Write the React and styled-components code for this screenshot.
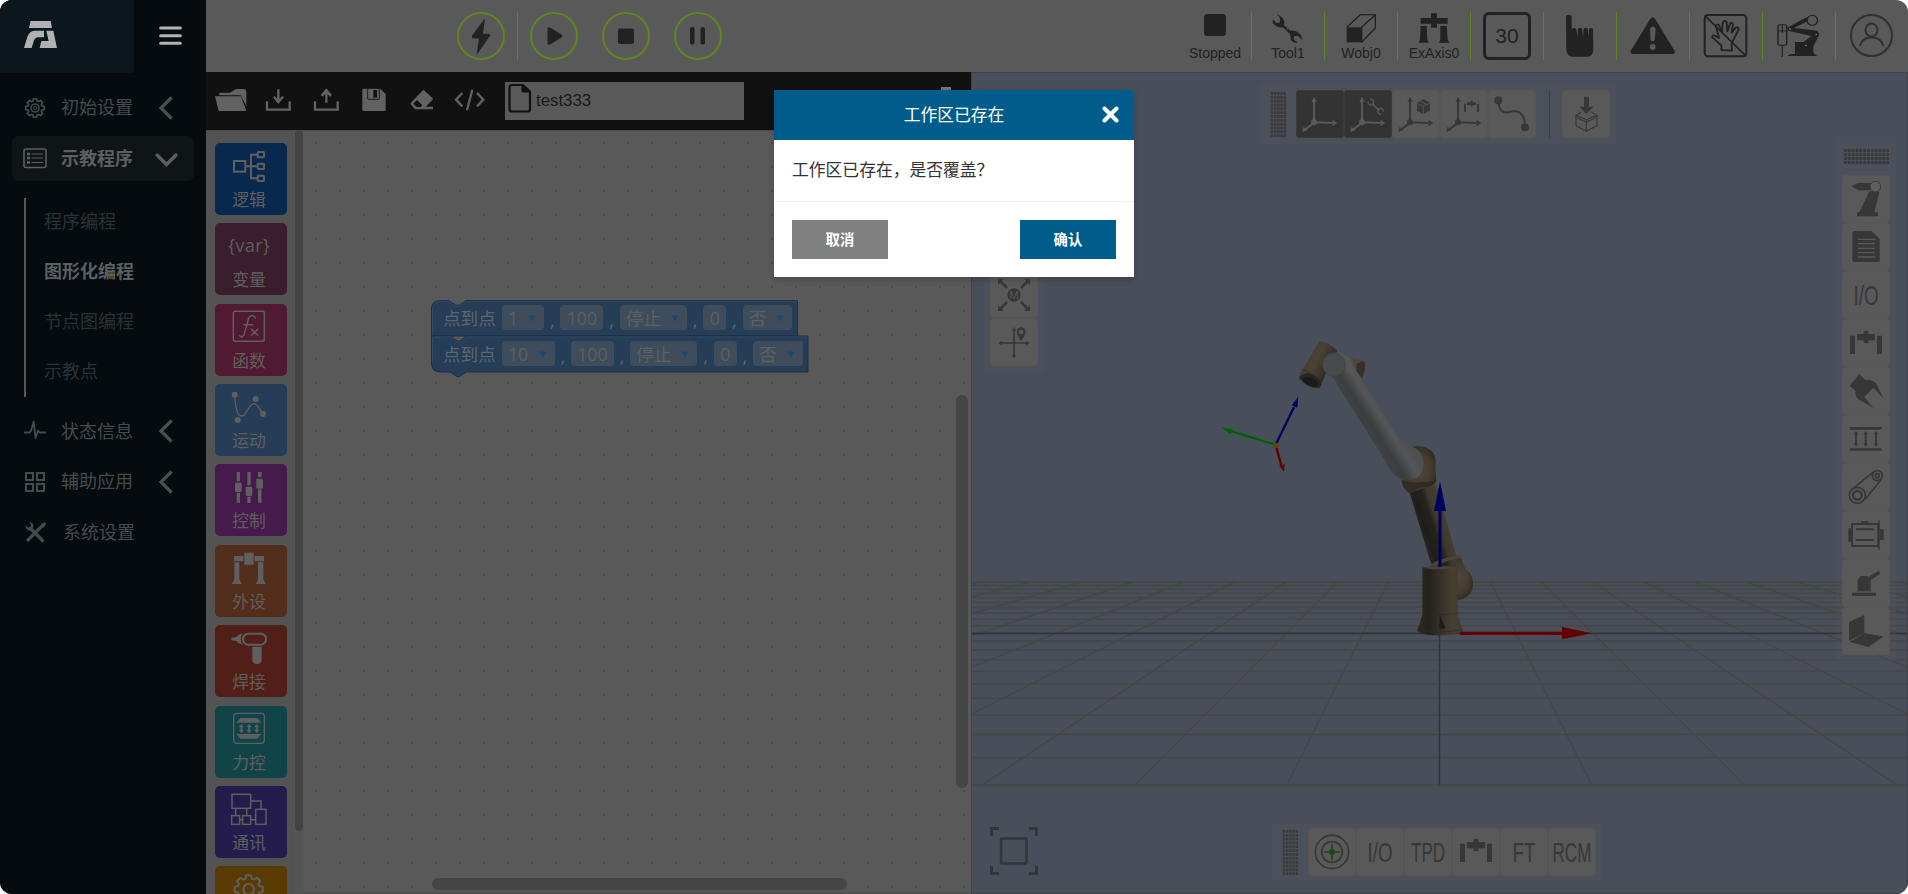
import React from "react";
import styled, { createGlobalStyle, css } from "styled-components";

const GlobalStyle = createGlobalStyle`
  * { box-sizing: border-box; }
  html, body { margin: 0; padding: 0; background: #fff; overflow: hidden; }
  svg { display: block; flex: none; }
`;

const cjk = `"Open Sans", "Noto Sans CJK SC", sans-serif`;
const latin = `"Liberation Sans", "Noto Sans CJK SC", sans-serif`;
const ink = "#222222";
const tool = "#373737";
const pale = "#595959";

const Shell = styled.div`
  display: flex;
  width: 1908px;
  height: 894px;
  border-radius: 12px;
  overflow: hidden;
  background: ${pale};
  font-family: ${cjk};
  position: relative;
`;

/* ---------- sidebar ---------- */
const Sidebar = styled.aside`
  width: 206px;
  flex: none;
  background: #050b0f;
  display: flex;
  flex-direction: column;
`;
const SideHeader = styled.div`
  display: flex;
  height: 73px;
`;
const LogoBox = styled.div`
  width: 134px;
  background: #0c171d;
`;
const Nav = styled.nav`
  display: flex;
  flex-direction: column;
  padding: 12px 12px 0;
`;
const NavItem = styled.div`
  display: flex;
  align-items: center;
  height: 45px;
  margin-bottom: 5.5px;
  padding-left: 11px;
  border-radius: 6px;
  font-size: 18px;
  line-height: 43px;
  color: ${(p) => (p.$active ? "#5c5f60" : "#454a4d")};
  font-weight: ${(p) => (p.$active ? 700 : 400)};
  background: ${(p) => (p.$active ? "#0f1416" : "transparent")};
`;
const NavLabel = styled.span`
  width: ${(p) => (p.$shift ? 90 : 92)}px;
  margin-left: ${(p) => (p.$shift ? 16 : 14)}px;
`;
const SubNav = styled.div`
  margin: 11.5px 0 12px 12px;
  height: 199px;
  border-left: 2px solid #565859;
  padding-left: 18px;
`;
const SubItem = styled.div`
  height: 50.2px;
  line-height: 47px;
  font-size: 18px;
  font-weight: ${(p) => (p.$active ? 700 : 400)};
  color: ${(p) => (p.$active ? "#5c5f60" : "#2b3235")};
`;

/* ---------- top header ---------- */
const Main = styled.div`
  flex: 1;
  display: flex;
  flex-direction: column;
  min-width: 0;
`;
const Header = styled.header`
  height: 72px;
  flex: none;
  display: flex;
  align-items: center;
  padding-left: 251px;
`;
const RoundButton = styled.div`
  width: 48px;
  height: 48px;
  border: 2px solid #5f8420;
  border-radius: 50%;
  margin-right: 24px;
  display: flex;
  align-items: center;
  justify-content: center;
`;
const RunDivider = styled.div`
  width: 1px;
  height: 48px;
  background: #5f8420;
  margin: 0 12px 0 -12px;
`;
const StatusGroup = styled.div`
  margin-left: auto;
  display: flex;
`;
const StatusCell = styled.div`
  width: ${(p) => (p.$last ? 72 : 73)}px;
  height: 48px;
  border-right: ${(p) => (p.$last ? 0 : 1)}px solid #5f8420;
  display: flex;
  flex-direction: column;
  align-items: center;
  font-family: ${latin};
  font-size: 14px;
  line-height: 19px;
  color: ${ink};
`;
const SpeedBox = styled.div`
  width: 48px;
  height: 48px;
  border: 3px solid ${ink};
  border-radius: 6px;
  font-size: 21px;
  line-height: 41px;
  text-align: center;
`;

/* ---------- editor ---------- */
const Content = styled.div`
  flex: 1;
  display: flex;
  min-height: 0;
`;
const Editor = styled.section`
  width: 765px;
  flex: none;
  display: flex;
  flex-direction: column;
`;
const FileBar = styled.div`
  height: 58px;
  flex: none;
  background: #111111;
  display: flex;
  align-items: center;
  padding-left: 1px;
`;
const FileInput = styled.div`
  width: 239px;
  height: 38px;
  margin-left: 10px;
  background: ${pale};
  display: flex;
  font-family: ${latin};
  font-size: 16.8px;
  line-height: 37px;
  color: #1a1a1a;
`;
const EditorBody = styled.div`
  flex: 1;
  display: flex;
  min-height: 0;
`;
const Toolbox = styled.div`
  width: 89px;
  flex: none;
  background: #535353;
  border-top: 1px solid #4a4a4a;
  padding: 12px 0 0 9px;
  display: flex;
  flex-direction: column;
  gap: 8.36px;
  overflow: hidden;
`;
const Tile = styled.div`
  width: 72px;
  height: 72px;
  flex: none;
  border-radius: 5px;
  background: ${(p) => p.$color};
  color: #5f5f5f;
  font-size: 16.8px;
  line-height: 26px;
  overflow: hidden;
`;
const TileLabel = styled.div`
  margin-top: 2px;
  padding-right: 4px;
  text-align: center;
`;
const ToolboxScroll = styled.div`
  width: 8px;
  flex: none;
  background: #555555;
  &::before {
    content: "";
    display: block;
    height: 701px;
    border-radius: 4px;
    background: #444444;
  }
`;
const Canvas = styled.div`
  flex: 1;
  position: relative;
  border-top: 1px solid #4a4a4a;
  border-bottom: 2px solid #515151;
  background-color: ${pale};
  background-image: linear-gradient(#3a3a3a, #3a3a3a), linear-gradient(#4d4d4d, #4d4d4d);
  background-repeat: repeat;
  background-image: radial-gradient(circle at 1px 1px, #383838 0.4px, transparent 0.95px);
  background-size: 24px 24px;
  background-position: 12px 11px;
`;
const ScrollThumb = styled.div`
  position: absolute;
  border-radius: 6px;
  background: #454545;
  ${(p) =>
    p.$vertical
      ? css`right: 3px; top: 264px; width: 12px; height: 393px;`
      : css`left: 129px; bottom: 2px; width: 415px; height: 12px;`}
`;
const Blocks = styled.div`
  position: absolute;
  left: 128px;
  top: 169px;
  width: 380px;
  height: 80px;
`;
const BlockShape = styled.svg`
  position: absolute;
  left: 0;
  top: 0;
`;
const BlockRow = styled.div`
  position: relative;
  height: 36px;
  display: flex;
  align-items: center;
  padding: 0 0 1px 12px;
  font-size: 17.6px;
  line-height: 24px;
  color: #5c6670;
`;
const BlockName = styled.span`
  width: 59px;
`;
const Field = styled.span`
  width: ${(p) => p.$w}px;
  height: 25px;
  border-radius: 4px;
  background: #3f4c5b;
  color: #5d5f61;
  display: flex;
  align-items: center;
  justify-content: ${(p) => (p.$menu ? "space-between" : "center")};
  padding: 0 ${(p) => (p.$menu ? "8px 0 6px" : "0")};
`;
const Comma = styled.span`
  width: 16.4px;
  text-align: center;
  padding-top: 4px;
`;

/* ---------- 3D view ---------- */
const Viewport = styled.section`
  flex: 1;
  position: relative;
  background: #484e5a;
  border: 1px solid #414348;
  overflow: hidden;
`;
const Panel = styled.div`
  position: absolute;
  background: rgba(89, 89, 89, 0.2);
  display: flex;
  flex-direction: ${(p) => (p.$column ? "column" : "row")};
  align-items: center;
  padding: 6px;
`;
const TopPanel = styled(Panel)`left: 288px; top: 11px; width: 356px; height: 60px; padding-left: 10px;`;
const LeftPanel = styled(Panel)`left: 12px; top: 47px; width: 60px; height: 252px; justify-content: flex-end;`;
const RightPanel = styled(Panel)`right: 11px; top: 65px; width: 60px; height: 523px; padding-top: 10px;`;
const BottomPanel = styled(Panel)`left: 300px; top: 749px; width: 330px; height: 60px; padding-left: 10px;`;
const Grip = styled.div`
  flex: none;
  width: ${(p) => (p.$wide ? 46 : 16)}px;
  height: ${(p) => (p.$wide ? 16 : 46)}px;
  margin: ${(p) => (p.$wide ? "0 0 11px 0" : "0 10px 0 0")};
  background-image: linear-gradient(#4d4f54 1px, transparent 1px),
    linear-gradient(90deg, #4d4f54 1px, transparent 1px);
  background-color: #383a3e;
  background-size: ${(p) => (p.$wide ? "3.85px 4px" : "3.2px 3.85px")};
`;
const PanelButton = styled.div`
  width: 48px;
  height: 48px;
  flex: none;
  border-radius: 3px;
  border: 1px solid ${(p) => (p.$on ? "#3a3a3a" : "#565656")};
  background: ${(p) => (p.$on ? "#333333" : pale)};
  color: ${(p) => (p.$on ? pale : tool)};
  svg { margin: -1px; }
`;
const PanelDivider = styled.div`
  flex: none;
  width: 1px;
  height: 48px;
  background: #3e3f40;
  margin: 0 12px 0 13px;
`;
const FrameButton = styled.div`
  position: absolute;
  left: 18px;
  top: 754px;
`;

/* ---------- dialog ---------- */
const Dialog = styled.div`
  position: absolute;
  left: 774px;
  top: 90px;
  width: 360px;
  height: 187px;
  background: #fff;
  box-shadow: 0 3px 6px rgba(0, 0, 0, 0.16);
  display: flex;
  flex-direction: column;
`;
const DialogHead = styled.div`
  height: 50px;
  background: #005c8b;
  color: #fff;
  font-size: 16.8px;
  line-height: 49px;
  text-align: center;
  position: relative;
  svg { position: absolute; right: 15px; top: 16px; }
`;
const DialogBody = styled.div`
  height: 62px;
  padding-left: 18px;
  border-bottom: 1px solid #f0f0f0;
  color: #333;
  font-size: 16.8px;
  line-height: 60px;
`;
const DialogFoot = styled.div`
  flex: 1;
  display: flex;
  justify-content: space-between;
  padding: 18px;
`;
const DialogButton = styled.button`
  width: 96px;
  height: 39px;
  border: 0;
  padding: 1px 0 0;
  background: ${(p) => (p.$primary ? "#005c8b" : "#808080")};
  color: #fff;
  font: 700 14.4px/38px ${cjk};
`;

/* ---------- drawings ---------- */
const Art = ({ box, w, h, children, color = "currentColor", stretch }) => (
  <svg width={w} height={h} viewBox={box} fill={color} preserveAspectRatio={stretch ? "none" : undefined}>
    {children}
  </svg>
);
const Line = ({ d, w = 5, c = "currentColor", ...rest }) => (
  <path d={d} fill="none" stroke={c} strokeWidth={w} {...rest} />
);

const Chevron = ({ down }) =>
  down ? (
    <Art w={26} h={26} box="0 0 26 26"><Line d="M4 10L13.500 19.500L23 10" w={3.4} c="#5c5f60" strokeLinecap="round" /></Art>
  ) : (
    <Art w={26} h={26} box="0 0 26 26"><Line d="M17.500 3.500L8 13L17.500 22.500" w={3.2} c="#4b5053" strokeLinecap="square" /></Art>
  );

const gearD = (cx, cy, r1, r2, n) => {
  const pts = [];
  for (let i = 0; i < n; i++) {
    const a = (i / n) * Math.PI * 2 - Math.PI / 2;
    const s = Math.PI / n;
    [[r1, -0.75], [r2, -0.42], [r2, 0.42], [r1, 0.75]].forEach(([r, k]) =>
      pts.push(`${(cx + r * Math.cos(a + k * s)).toFixed(2)} ${(cy + r * Math.sin(a + k * s)).toFixed(2)}`)
    );
  }
  return `M${pts.join("L")}Z`;
};

const navArt = {
  init: (
    <g stroke="currentColor" fill="none">
      <path d={gearD(12, 12, 7.2, 9.4, 8)} strokeWidth="1.7" /><circle cx="12" cy="12" r="4" strokeWidth="1.6" /><circle cx="12" cy="12" r="1.6" strokeWidth="1" />
    </g>
  ),
  teach: (
    <g stroke="currentColor" fill="none">
      <rect x="1" y="3" width="22" height="18.500" rx="2" strokeWidth="1.6" />
      <path d="M8.500 8H20M8.500 12H20M8.500 16.500H20" strokeWidth="1.2" /><path d="M4 8H7M4 12H7M4 16.500H7" strokeWidth="2.4" />
    </g>
  ),
  status: <Line d="M1 13.500H6.500L8 12L10.700 2.500L12.500 19L15 11.500L16.500 13.500H23" w={1.8} strokeLinejoin="round" />,
  apps: (
    <g stroke="currentColor" fill="none" strokeWidth="2">
      <rect x="3" y="3" width="7" height="7" /><rect x="14" y="3" width="7" height="7" /><rect x="3" y="14" width="7" height="7" /><rect x="14" y="14" width="7" height="7" />
    </g>
  ),
  system: (
    <g>
      <Line d="M4 21L20 5" w={3.2} /><Line d="M8.500 9.500L19.500 20.500" w={3.4} strokeLinecap="round" />
      <path d="M2.500 5L5 7.500L7.500 7L8 4.500L5.800 2.300Q9.500 2 10.500 5.500L9.500 9.500L6 10.500Q2.500 9.500 2.500 5Z" /><path d="M18 4L22 2L23 4L20.500 8Z" />
    </g>
  ),
};

const tiles = [
  { name: "逻辑", color: "#08284d", box: "645 429 216 126", art: (
    <g fill="none" stroke="currentColor" strokeWidth="6">
      <rect x="702" y="483" width="34" height="32" /><path d="M736 499H772M772 464H753V535H772" /><rect x="773" y="456" width="19" height="16" rx="2" /><rect x="773" y="491" width="19" height="16" rx="2" /><rect x="773" y="527" width="19" height="16" rx="2" />
    </g>) },
  { name: "变量", color: "#3a1e2d", box: "645 669 216 126", art: (
    <text x="747" y="756" fontSize="53" textAnchor="middle" textLength="124">{"{var}"}</text>) },
  { name: "函数", color: "#501a33", box: "645 12 216 126", art: (
    <g fill="none" stroke="currentColor" strokeWidth="4.500" strokeLinecap="round">
      <rect x="700" y="34" width="93" height="90" rx="6" /><path d="M766 54C760 42 748 46 745 58L734 98C731 111 724 114 720 107M732 74H758M755 88L773 105M773 88L755 105" />
    </g>) },
  { name: "运动", color: "#263d57", box: "645 252 216 126", art: (
    <g><circle cx="704" cy="284" r="9" /><circle cx="767" cy="297" r="9" /><circle cx="789" cy="342" r="9" /><circle cx="713" cy="360" r="9" />
      <Line d="M704 284C706 330 714 348 726 348C742 346 744 311 763 311C774 313 781 332 789 342" w={4} /></g>) },
  { name: "控制", color: "#461a4c", box: "645 492 216 126", art: (
    <g><path d="M710 516h10v28h-10zM710 578h10v30h-10zM742 516h10v40h-10zM742 590h10v19h-10zM774 516h11v16h-11zM774 568h11v40h-11z" /><rect x="705" y="548" width="20" height="28" rx="4" /><rect x="737" y="560" width="20" height="28" rx="4" /><rect x="769" y="536" width="20" height="30" rx="4" /></g>) },
  { name: "外设", color: "#522d1b", box: "645 735 216 126", art: (
    <path d="M733 758h28v36h-28zM702 768h28v16h-28zM764 768h28v16h-28zM703 787h15v50l7 15h-29l7-15zM774 787h16v50l7 15h-29l6-15z" />) },
  { name: "焊接", color: "#521e18", box: "45 105 216 126", art: (
    <g><rect x="129" y="131" width="69" height="33" rx="16" fill="none" stroke="currentColor" strokeWidth="6" /><path d="M94 143l16-2 4-6 14-5q-12 18 0 34l-14-5-4-6-16-2z" /><path d="M157 170h28v38q0 14-14 14t-14-14z" /></g>) },
  { name: "力控", color: "#114449", box: "45 348 216 126", art: (
    <g><rect x="101" y="370" width="92" height="90" rx="9" fill="none" stroke="currentColor" strokeWidth="4" /><path d="M121 384h51l12 14h-75zM109 432h75l-12 14h-51z" />
      {[124, 147, 170].map((x) => <path key={x} d={`M${x} 402l8 9h-5v9h5l-8 9l-8-9h5v-9h-5z`} />)}</g>) },
  { name: "通讯", color: "#241c4c", box: "45 588 216 126", art: (
    <g fill="none" stroke="currentColor" strokeWidth="4.500"><rect x="96" y="613" width="56" height="42" /><path d="M152 633H183V657M107 655V677M140 655V677M118 689H129M151 689H167" /><rect x="167" y="658" width="31" height="45" /><rect x="95" y="677" width="24" height="26" /><rect x="128" y="677" width="24" height="26" /></g>) },
  { color: "#593a00", box: "45 828 216 126", art: (
    <g fill="none" stroke="currentColor" strokeWidth="6"><path d={gearD(146, 898, 33, 43, 8)} strokeLinejoin="round" /><circle cx="146" cy="898" r="16" /></g>) },
];

const Axes = ({ x = 0 }) => (
  <g transform={`translate(${x} 0)`}>
    <Line d="M78 368V300M78 367L137 369M78 368L52 388" w={6} />
    <circle cx="78" cy="367" r="9" />
    <path d="M78 290l8 16h-16zM148 369l-14 9v-18zM42 396l5-16 11 11z" />
  </g>
);
const Gantry = () => (
  <g><path d="M231 612h20v-9h14v9h20v19h-20v8h-14v-8h-20z" /><path d="M210 617h15v55h-15zM291 617h15v55h-15z" /></g>
);
const PanelText = ({ children, len, y = 34 }) => (
  <svg width="48" height="48" viewBox="0 0 48 48">
    <text x="24" y={y} textAnchor="middle" fontSize="28.500" fontFamily="Liberation Sans, sans-serif" textLength={len} lengthAdjust="spacingAndGlyphs" fill={tool}>{children}</text>
  </svg>
);
const T = ({ box, children, on }) => (
  <PanelButton $on={on}><Art w={48} h={48} box={box}>{children}</Art></PanelButton>
);

/* Floor grid: 20 x 20 cells seen in one-point perspective. */
const HORIZON = 406.5;
const rowY = (i) => HORIZON + 3085 / (10.1 + i);
const FloorGrid = () => (
  <g fill="none" stroke="#464644" strokeWidth="1.4">
    {Array.from({ length: 21 }, (_, i) => <line key={`r${i}`} x1="-1" x2="936" y1={rowY(i)} y2={rowY(i)} />)}
    {Array.from({ length: 21 }, (_, k) => {
      const n = k - 10;
      return <line key={`c${k}`} x1={467.5 + n * 152.4} y1={rowY(0)} x2={467.5 + n * 51.1} y2={rowY(20)} />;
    })}
    <path d="M-1 560.500H936M467.500 560V711.800" stroke="#313435" strokeWidth="1.3" />
  </g>
);

const Robot = () => (
  <g transform="translate(228 247) scale(.33333)">
    <defs>
      <linearGradient id="base" x1="0" x2="1"><stop offset="0" stopColor="#2d2a23" /><stop offset=".25" stopColor="#25221c" /><stop offset=".75" stopColor="#453e33" /><stop offset="1" stopColor="#433b30" /></linearGradient>
      <linearGradient id="arm" gradientUnits="userSpaceOnUse" x1="655" y1="630" x2="745" y2="600"><stop offset="0" stopColor="#302c24" /><stop offset=".2" stopColor="#1e1d19" /><stop offset=".5" stopColor="#26231d" /><stop offset=".65" stopColor="#3e372d" /><stop offset="1" stopColor="#494035" /></linearGradient>
      <linearGradient id="white" gradientUnits="userSpaceOnUse" x1="480" y1="315" x2="553" y2="268"><stop offset="0" stopColor="#404243" /><stop offset=".35" stopColor="#3b3d3e" /><stop offset=".75" stopColor="#555657" /><stop offset="1" stopColor="#4e4f51" /></linearGradient>
      <linearGradient id="head" gradientUnits="userSpaceOnUse" x1="315" y1="110" x2="385" y2="145"><stop offset="0" stopColor="#453c31" /><stop offset=".45" stopColor="#4b4236" /><stop offset="1" stopColor="#302b23" /></linearGradient>
      <radialGradient id="elbow"><stop offset="0" stopColor="#50463a" /><stop offset=".7" stopColor="#433b31" /><stop offset="1" stopColor="#342e26" /></radialGradient>
    </defs>
    <path d="M745 710L780 707L797 748Q820 762 819 795Q816 835 772 840L735 810Z" fill="url(#elbow)" />
    <path d="M628 515L709 493L770 710L773 745H700L690 722Z" fill="url(#arm)" />
    <path d="M690 738Q705 718 780 704L784 713Q750 716 708 738Z" fill="#4d4539" />
    <path d="M635 380Q675 374 697 395Q711 412 706 440L709 482Q704 499 675 503L630 520Q608 510 605 480L640 455Z" fill="url(#elbow)" />
    <path d="M605 482Q660 494 709 480Q706 501 668 501Q648 504 630 520Q611 507 605 482Z" fill="#302b23" />
    <path d="M653 935Q650 929 657 917L667 885V743Q720 733 773 743V885L783 915Q790 930 789 936Q760 946 720 946Q670 946 653 935Z" fill="url(#base)" />
    <path d="M667 744Q720 733 773 743Q720 752 667 744Z" fill="#4a4235" />
    <path d="M667 880Q720 889 773 880M653 927Q720 944 788 928" fill="none" stroke="#2f2b24" strokeWidth="2" />
    <path d="M720 885L737 926H718Z" fill="#1e1c18" />
    <path d="M400 95L462 115L495 124Q499 150 485 180L450 165Z" fill="#50473a" />
    <path d="M470 132Q490 120 495 128Q496 155 484 178L468 158Z" fill="#362f27" />
    <path d="M358 64Q385 65 411 92L405 110L378 160L359 203L337 204L298 176Q296 168 302 158Z" fill="url(#head)" />
    <path d="M298 175Q303 160 325 160Q352 164 365 192L357 204Q320 202 298 175Z" fill="#29251f" />
    <ellipse cx="331" cy="185" rx="24" ry="13" transform="rotate(22 331 185)" fill="#1d1b17" />
    <path d="M302 148Q330 152 361 182" fill="none" stroke="#302a22" strokeWidth="2" />
    <path d="M368 135Q366 99 402 98Q440 96 457 118Q459 142 482 170L590 345Q612 373 638 380Q668 391 671 430Q669 479 622 482Q580 478 559 428L400 175Q374 158 368 135Z" fill="url(#white)" />
    <path d="M430 105Q460 114 459 140L480 170L440 156Z" fill="#555657" />
    <circle cx="402" cy="134" r="34" fill="#484a4c" stroke="#404345" strokeWidth="2" />
    <path d="M228 372L282 262" stroke="#00005e" strokeWidth="7" /><path d="M295 230L292 263L275 256Z" fill="#00005e" />
    <path d="M226 374L95 334" stroke="#006000" strokeWidth="7" /><path d="M65 323L98 327L91 343Z" fill="#006000" />
    <path d="M228 378L244 436" stroke="#610000" strokeWidth="7" /><path d="M252 455L238 437L254 433Z" fill="#610000" />
    <circle cx="228" cy="376" r="8" fill="#684000" />
    <path d="M720 741V570" stroke="#00005e" strokeWidth="9" /><path d="M720 484L738 573H702Z" fill="#00005e" />
    <path d="M780 940H1090" stroke="#610000" strokeWidth="10" /><path d="M1175 940L1086 958V921Z" fill="#610000" />
  </g>
);

const Caret = () => <Art w={8} h={8} box="0 0 8 8" color="#1e4670"><path d="M.5 1.500H7.500L4 7.500Z" /></Art>;
const BlockStack = () => (
  <Blocks>
    <BlockShape width="380" height="80" viewBox="0 0 380 80">
      <g fill="#263d57" stroke="#1c2f45" strokeWidth="1">
        <path d="M.5 9Q.5 .7 9 .7H18L25 5.300H28L35 .7H366.500V36H.5Z" />
        <path d="M.5 36H20L26 41H29L35.500 36H377V72H35.500L28.500 76.500H25.500L19 72H9Q.5 72 .5 63Z" />
      </g>
      <path d="M1.500 35V9Q2 1.700 9 1.700H18L25 6.300H28L35 1.700H366M1.500 63V37H20L26 42H29L36 37H376" fill="none" stroke="#304a67" strokeWidth="1" />
    </BlockShape>
    {[["1", 42], ["10", 52.5]].map(([n, w]) => (
      <BlockRow key={n}>
        <BlockName>点到点</BlockName>
        <Field $w={w} $menu>{n}<Caret /></Field><Comma>,</Comma>
        <Field $w={43}>100</Field><Comma>,</Comma>
        <Field $w={67} $menu>停止<Caret /></Field><Comma>,</Comma>
        <Field $w={23}>0</Field><Comma>,</Comma>
        <Field $w={49.5} $menu>否<Caret /></Field>
      </BlockRow>
    ))}
  </Blocks>
);

export default function App() {
  return (
    <Shell>
      <GlobalStyle />
      <Sidebar>
        <SideHeader>
          <LogoBox>
            <Art w={134} h={72} box="0 0 402 216" color="#afb1b2">
              <path d="M92 63H152L156 84H87Z" />
              <path d="M103 92H132V112H112Q105 113 102 121L95 144H72L82 111Q88 93 103 92Z" />
              <path d="M139 92H160L171 144H119L124 123H146Z" />
            </Art>
          </LogoBox>
          <Art w={72} h={72} box="402 0 216 216"><Line d="M482 84H541M482 107H541M482 130H541" w={9} c="#b2b3b4" strokeLinecap="round" /></Art>
        </SideHeader>
        <Nav>
          {[["初始设置", "init"], ["示教程序", "teach"]].map(([t, k]) => (
            <NavItem key={k} $active={k === "teach"}>
              <Art w={24} h={24} box="0 0 24 24">{navArt[k]}</Art>
              <NavLabel>{t}</NavLabel><Chevron down={k === "teach"} />
            </NavItem>
          ))}
          <SubNav>
            {["程序编程", "图形化编程", "节点图编程", "示教点"].map((t) => (
              <SubItem key={t} $active={t === "图形化编程"}>{t}</SubItem>
            ))}
          </SubNav>
          {[["状态信息", "status"], ["辅助应用", "apps"], ["系统设置", "system"]].map(([t, k]) => (
            <NavItem key={k}>
              <Art w={24} h={24} box="0 0 24 24">{navArt[k]}</Art>
              <NavLabel $shift={k === "system"}>{t}</NavLabel>{k !== "system" && <Chevron />}
            </NavItem>
          ))}
        </Nav>
      </Sidebar>

      <Main>
        <Header>
          <RoundButton><Art w={48} h={48} box="0 0 48 48" color={ink}><path d="M28 6.300L14.800 24L15.500 26.300L22 26.600L19.600 43L33.200 23.500L32.500 22L26 21.600Z" /></Art></RoundButton>
          <RunDivider />
          <RoundButton><Art w={48} h={48} box="0 0 48 48" color={ink}><path d="M17.500 17Q17.500 14.500 20 15.500L31.500 22.500Q33 24 31.500 25.500L20 32.500Q17.500 33.500 17.500 31Z" /></Art></RoundButton>
          <RoundButton><Art w={48} h={48} box="0 0 48 48" color={ink}><rect x="16" y="16.500" width="16" height="15.500" rx="2" /></Art></RoundButton>
          <RoundButton><Art w={48} h={48} box="0 0 48 48" color={ink}><rect x="16" y="15" width="4.500" height="17.500" rx="2" /><rect x="26.500" y="15" width="4.500" height="17.500" rx="2" /></Art></RoundButton>
          <StatusGroup>
            <StatusCell><Art w={72} h={32} box="0 0 72 32"><rect x="25" y="2" width="22" height="22" rx="3.500" /></Art>Stopped</StatusCell>
            <StatusCell>
              <Art w={72} h={32} box="211 36 149 96" stretch>
                <path d="M262 42L273 52Q280 65 277 75L290 92Q302 90 312 105L316 120L306 108L298 108L297 118L306 128Q294 130 291 116L290 103L275 82Q265 86 254 70V58L262 70L269 67L269 54Z" />
                <circle cx="285" cy="86" r="3" fill="#444" />
              </Art>Tool1
            </StatusCell>
            <StatusCell>
              <Art w={72} h={32} box="111 36 216 96">
                <path d="M176 82H221V127H176Z" /><Line d="M176 82L217 44H262L221 82V127L262 84V44L221 82" w={4} c={ink} strokeLinejoin="round" />
              </Art>Wobj0
            </StatusCell>
            <StatusCell>
              <Art w={72} h={32} box="330 36 216 96">
                <path d="M398 54h31v-14h18v14h32v17h-32v12h-18v-12h-31zM398 78h18l2 40 4 10h-30l4-10zM457 78h19l3 40 5 10h-31l4-10z" />
              </Art>ExAxis0
            </StatusCell>
            <StatusCell><SpeedBox>30</SpeedBox></StatusCell>
            <StatusCell>
              <Art w={72} h={48} box="768 36 216 144"><path d="M834 50q0-6 8-6t9 6v38q6-8 14 0l3 23 2-25q7-5 12 0l3 24 2-24q7-5 12 0l2 24 2-24q6-4 12 0l1 60q0 24-20 24h-41q-20 0-20-24z" /></Art>
            </StatusCell>
            <StatusCell>
              <Art w={72} h={48} box="987 36 216 144"><path d="M1087 56q7-9 14 0l59 97q2 9-7 9h-119q-8 0-6-9z" /><path d="M1086 88q0-8 8-8t9 8l-3 33q-6 6-12 0z" fill={pale} /><circle cx="1094" cy="141" r="9" fill={pale} /></Art>
            </StatusCell>
            <StatusCell>
              <Art w={72} h={48} box="1206 36 216 144">
                <g fill="none" stroke={ink} strokeWidth="5" strokeLinejoin="round"><rect x="1250" y="45" width="125" height="124" rx="10" strokeWidth="6" /><path d="M1250 46L1375 169" />
                  <path d="M1300 150V136L1273 112Q1271 103 1283 108L1293 114L1284 79Q1285 70 1293 75L1302 97L1304 68Q1309 59 1316 66L1318 94L1327 69Q1335 66 1335 74L1331 98L1343 83Q1352 80 1352 88L1331 130L1332 152Z" strokeWidth="5.500" /></g>
              </Art>
            </StatusCell>
            <StatusCell>
              <Art w={72} h={48} box="1268 36 149 144" stretch>
                <path d="M1318 83L1358 52L1362 62L1332 84L1380 92Q1388 102 1382 111L1372 140V158L1380 168H1318L1325 162H1334V126H1352L1368 108L1320 92Z" />
                <rect x="1299" y="74" width="18" height="62" rx="4" fill="none" stroke={ink} strokeWidth="3" /><Line d="M1308 74V98M1300 93H1317M1308 136V171" w={2.5} c={ink} />
                <ellipse cx="1370" cy="61" rx="11" ry="15" fill={pale} stroke={ink} strokeWidth="3" /><circle cx="1324" cy="87" r="2" fill="#888" /><circle cx="1378" cy="103" r="2" fill="#888" /><circle cx="1357" cy="136" r="2" fill="#888" />
              </Art>
            </StatusCell>
            <StatusCell $last>
              <Art w={72} h={48} box="0 0 72 48"><g fill="none" stroke="#303030" strokeWidth="2"><circle cx="35.500" cy="23.500" r="20.500" /><ellipse cx="35.500" cy="18" rx="6" ry="6.500" /><path d="M24 34Q26 25.500 35.500 25.500Q45 25.500 47.500 34" /></g></Art>
            </StatusCell>
          </StatusGroup>
        </Header>

        <Content>
          <Editor>
            <FileBar>
              <Art w={48} h={58} box="621 216 144 174" color="#626262"><path d="M658 278H690L708 267H733Q739 268 739 276V318L722 286H658Z" /><path d="M645 289H723L739 333H656Z" /></Art>
              <Art w={48} h={58} box="765 216 144 174"><Line d="M801 304V329H869V304M835 268V300" w={7} c="#626262" /><path d="M819 292L835 312L852 292L847 288L835 299L824 288Z" fill="#626262" /></Art>
              <Art w={48} h={58} box="909 216 144 174"><Line d="M945 304V329H1013V304M979 275V308" w={7} c="#626262" /><path d="M962 285L979 265L996 285L990 290L979 279L968 290Z" fill="#626262" /></Art>
              <Art w={48} h={58} box="1053 216 144 174" color="#626262"><path d="M1087 270Q1087 266 1091 266H1141L1157 282V329Q1157 333 1153 333H1091Q1087 333 1087 329Z" /><rect x="1103" y="264" width="35" height="34" fill="none" stroke="#111" strokeWidth="2.500" rx="2" /><path d="M1120 270H1131V293H1120Z" fill="#111" /></Art>
              <Art w={48} h={58} box="1197 216 144 174" color="#626262"><path d="M1270 269L1298 294V299L1277 320H1299V328H1245L1232 313V309Z" /><path d="M1251 300L1267 316L1262 321H1250L1240 311Z" fill="#111" /></Art>
              <Art w={48} h={58} box="1343 216 144 174"><Line d="M1389 279L1370 299L1389 319M1433 279L1452 299L1433 319M1419 269L1403 331" w={7} c="#626262" /></Art>
              <FileInput>
                <Art w={31} h={38} box="0 0 31 38" color="#111"><path d="M7 3H18L25 9.500V27Q25 29.500 22.500 29.500H7Q4.500 29.500 4.500 27V5.500Q4.500 3 7 3Z" fill="none" stroke="#111" strokeWidth="2.200" /><path d="M16.500 2.500H18.500L25.500 10.500H18Q16.500 10 16.500 9Z" /></Art>
                test333
              </FileInput>
              <Art w={220} h={58} box="744 72 220 58" color="#747474"><path d="M941 87H951V100H948V90H941Z" /></Art>
            </FileBar>
            <EditorBody>
              <Toolbox>
                {tiles.map((t) => (
                  <Tile key={t.color} $color={t.color}>
                    <Art w={72} h={42} box={t.box}>{t.art}</Art>
                    {t.name && <TileLabel>{t.name}</TileLabel>}
                  </Tile>
                ))}
              </Toolbox>
              <ToolboxScroll />
              <Canvas>
                <ScrollThumb $vertical />
                <ScrollThumb />
                <BlockStack />
              </Canvas>
            </EditorBody>
          </Editor>

          <Viewport>
            <svg width="936" height="820" viewBox="0 0 936 820"><FloorGrid /><Robot /></svg>
            <TopPanel>
              <Grip />
              <T on box="24 270 144 144"><Axes /></T>
              <T on box="168 270 144 144"><Axes x={144} /><Line d="M252 311L274 332" w={5} /><Line d="M247 298A8.500 8.500 0 1 1 240 305M279 342A8.500 8.500 0 1 1 286 335" w={4} /></T>
              <T box="312 270 144 144"><Axes x={288} /><path d="M387 309L406 297L426 308V331L407 343L387 332Z" /><Line d="M387 310L406 318L426 309M406 318V342M396 303L416 313" w={2.5} c={pale} /></T>
              <T box="456 270 144 144"><Axes x={432} /><path d="M528 311h6v25h-6zM567 311h6v25h-6zM537 307h10v-4h7v4h10v8h-10v4h-7v-4h-10z" /></T>
              <T box="600 270 144 144"><circle cx="631" cy="301" r="12" /><circle cx="711" cy="382" r="12" /><Line d="M631 301Q632 340 660 337Q690 328 702 345Q711 355 711 382" w={6} /></T>
              <PanelDivider />
              <T box="822 270 144 144"><path d="M888 290H903V320H917L895 342L874 320H888Z" /><Line d="M880 336L864 346V377L895 393L927 377V346L910 336M864 346L895 359L927 346M895 359V393M868 354L895 366L922 354" w={3.5} /></T>
            </TopPanel>
            <LeftPanel $column>
              <T box="90 630 144 144"><circle cx="162" cy="705" r="20" /><text x="162" y="717" fontSize="32" textAnchor="middle" fill={pale}>M</text><Line d="M122 665L141 684M202 665L183 684M122 745L141 726M202 745L183 726" w={8} /><path d="M114 657h17l-17 17zM210 657h-17l17 17zM114 753h17l-17-17zM210 753h-17l17-17z" /></T>
              <T box="90 777 144 144"><Line d="M122 852H202M162 812V892" w={5} /><path d="M115 852l11-7v14zM209 852l-11-7v14zM162 804l7 11h-14zM162 899l7-11h-14z" /><path fillRule="evenodd" d="M183 805q13 1 14 14q-1 10-14 28q-12-18-13-28q1-13 13-14zM183 812a7 7 0 1 0 .1 0z" /></T>
            </LeftPanel>
            <RightPanel $column>
              <Grip $wide />
              <T box="186 135 144 144"><path d="M214 169L234 159H272V181H234ZM268 184L298 186L283 247H294V259H231V247H238Z" /><circle cx="286" cy="170" r="16" fill="#5f5f5f" stroke={tool} strokeWidth="3" /></T>
              <T box="186 279 144 144"><path d="M217 308q0-5 5-5h53l24 25v63q0 5-5 5h-72q-5 0-5-5z" /><Line d="M234 328H285M234 341H285M234 355H285M234 368H285M234 381H285" w={4} c={pale} /></T>
              <PanelButton><PanelText len="25">I/O</PanelText></PanelButton>
              <T box="186 567 144 144"><Gantry /></T>
              <T box="186 711 144 144"><path d="M238 733L256 750Q275 747 288 760L311 806L280 773L253 800L280 833L243 812Q224 805 226 783L209 767Z" /></T>
              <T box="186 45 144 144"><path d="M207 81H308L302 89H213ZM207 152H308L302 145H213Z" />{[228, 257, 288].map((x) => <path key={x} d={`M${x} 93l7 10h-4v27h4l-7 10l-7-10h4v-27h-4z`} />)}</T>
              <T box="186 189 144 144"><g fill="none" stroke={tool} strokeWidth="5"><circle cx="232" cy="286" r="24" /><circle cx="232" cy="286" r="13" strokeWidth="7" /><circle cx="292" cy="227" r="15" /><circle cx="292" cy="227" r="6" /><path d="M213 271L281 215M256 298L304 238" /></g></T>
              <T box="186 333 144 144"><g fill="none" stroke={tool} strokeWidth="6"><rect x="216" y="372" width="79" height="66" /><path d="M228 388H282M228 420H282" /><path d="M297 360V449" strokeWidth="4" /></g><path d="M205 385h9v40h-9zM300 388h11v32h-11zM243 364h22v7h-22z" /></T>
              <T box="186 477 144 144"><path d="M216 578h72v10h-72zM233 574v-34l9-12h20l10 12v34zM264 532l32-20 5 9-32 21z" /></T>
              <T box="186 621 144 144"><path d="M207 667L253 645V699L207 723ZM209 726L253 700L311 709L266 741Z" /></T>
            </RightPanel>
            <FrameButton>
              <Art w={48} h={48} box="0 0 48 48"><g fill="none" stroke="#333538"><rect x="11" y="11.500" width="25.500" height="25" rx="1" strokeWidth="2.600" /><path d="M1.500 9V1.500H9M39 1.500H46.500V9M1.500 39V46.500H9M39 46.500H46.500V39" strokeWidth="3" /></g></Art>
            </FrameButton>
            <BottomPanel>
              <Grip />
              <T box="138 39 144 144"><g fill="none" stroke={tool} strokeWidth="5"><circle cx="210" cy="111" r="50" /><circle cx="210" cy="111" r="31" /></g><circle cx="210" cy="111" r="9" fill="#1e451e" /><Line d="M210 86V136M186 111H234" w={5} c="#174a17" /></T>
              <PanelButton><PanelText len="25">I/O</PanelText></PanelButton>
              <PanelButton><PanelText len="34">TPD</PanelText></PanelButton>
              <T box="186 570 144 144"><Gantry /></T>
              <PanelButton><PanelText len="23">FT</PanelText></PanelButton>
              <PanelButton><PanelText len="39">RCM</PanelText></PanelButton>
            </BottomPanel>
          </Viewport>
        </Content>
      </Main>

      <Dialog>
        <DialogHead>
          工作区已存在
          <Art w={17} h={17} box="0 0 17 17"><Line d="M2.500 2.500L14.500 14.500M14.500 2.500L2.500 14.500" w={4} c="#fff" strokeLinecap="round" /></Art>
        </DialogHead>
        <DialogBody>工作区已存在，是否覆盖？</DialogBody>
        <DialogFoot>
          <DialogButton>取消</DialogButton>
          <DialogButton $primary>确认</DialogButton>
        </DialogFoot>
      </Dialog>
    </Shell>
  );
}
